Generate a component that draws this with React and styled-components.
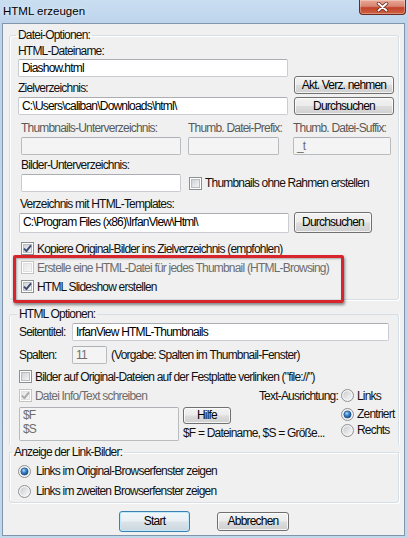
import React, { useId } from 'react';
import styled, { createGlobalStyle, css } from 'styled-components';

const UI_FONT = '"Liberation Sans", Arial, sans-serif';

const GlobalStyle = createGlobalStyle`
  html, body { margin: 0; padding: 0; }
  body {
    background: #c2d7ec;
    font-family: ${UI_FONT};
    font-size: 12px;
    letter-spacing: -0.8px;
    color: #111;
  }
  * { box-sizing: border-box; }
`;

const Window = styled.div`
  width: 408px;
  height: 538px;
  display: flex;
  flex-direction: column;
  background: linear-gradient(180deg, #cadef1 0%, #bdd4eb 23px, #c1d7ec 100%);
  overflow: hidden;
`;

const TitleBar = styled.div`
  flex: none;
  height: 23px;
  display: flex;
  align-items: flex-start;
  padding-left: 3px;
`;

const Title = styled.div`
  font-size: 11.5px;
  letter-spacing: 0;
  line-height: 14px;
  padding-top: 4px;
  color: #000;
  text-shadow: 0 0 5px rgba(255, 255, 255, 0.9);
`;

const CloseButton = styled.div`
  margin-left: auto;
  margin-right: 2px;
  width: 47px;
  height: 15px;
  border: 1px solid #6a2a20;
  border-top: none;
  border-radius: 0 0 4px 4px;
  background: linear-gradient(180deg, #e9a796 0%, #d98571 45%, #c2442c 55%, #d0603f 100%);
  box-shadow: inset 0 0 0 1px rgba(255, 255, 255, 0.3);
  display: flex;
  align-items: center;
  justify-content: center;
`;

const Client = styled.div`
  flex: 1;
  margin: 0 3px 2px 2px;
  background: #f0f0f0;
  border: 1px solid #8296ab;
  padding: 0 5px 0 6px;
  display: flex;
  flex-direction: column;
`;

const Group = styled.fieldset`
  margin: ${(p) => p.$mt || 0}px 0 0;
  padding: ${(p) => p.$pad};
  min-width: 0;
  border: 1px solid #d5dfe5;
  border-radius: 3px;
  box-shadow: inset 1px 1px 0 #fff, 1px 1px 0 #fff;
  ${(p) =>
    p.$openBottom &&
    css`
      border-bottom: none;
      border-radius: 3px 3px 0 0;
      box-shadow: inset 1px 0 0 #fff, 1px 0 0 #fff;
    `}
  ${(p) =>
    p.$joined &&
    css`
      border-radius: 0 0 3px 3px;
    `}
`;

const Legend = styled.legend`
  padding: 0 2px;
  margin-left: ${(p) => (p.$ml !== undefined ? p.$ml : -2)}px;
  line-height: 14px;
  color: #111;
`;

const Label = styled.div`
  line-height: 15px;
  white-space: nowrap;
  margin-top: ${(p) => p.$mt || 0}px;
  margin-bottom: ${(p) => p.$mb || 0}px;
  margin-left: ${(p) => p.$ml || 0}px;
  color: ${(p) => (p.$disabled ? '#5a5a5a' : '#111')};
`;

const TextBox = styled.div`
  flex: none;
  width: ${(p) => p.$w}px;
  height: ${(p) => p.$h || 18}px;
  margin-left: ${(p) => p.$ml || 0}px;
  padding: 0 3px;
  display: flex;
  align-items: center;
  border: 1px solid ${(p) => (p.$disabled ? '#b9bcbf' : '#c9ccd1')};
  border-top-color: ${(p) => (p.$disabled ? '#adb1b5' : '#abadb3')};
  border-radius: 2px;
  background: ${(p) => (p.$disabled ? '#f4f4f4' : '#fff')};
  color: ${(p) => (p.$disabled ? '#6d6d6d' : '#000')};
  line-height: 15px;
  white-space: nowrap;
  overflow: hidden;
`;

const TextArea = styled.div`
  width: 160px;
  height: 34px;
  margin-top: 2px;
  padding: 0 3px;
  border: 1px solid #b9bcbf;
  border-top-color: #adb1b5;
  border-radius: 2px;
  background: #f4f4f4;
  color: #6d6d6d;
  line-height: 14px;
`;

const Button = styled.button`
  flex: none;
  width: ${(p) => p.$w}px;
  height: ${(p) => p.$h || 18}px;
  margin-left: ${(p) => (p.$push ? 'auto' : '0')};
  margin-right: ${(p) => p.$mr || 0}px;
  padding: 0;
  font-family: ${UI_FONT};
  font-size: 12px;
  letter-spacing: -0.8px;
  line-height: 15px;
  white-space: nowrap;
  color: #000;
  border: 1px solid #707070;
  border-radius: 3px;
  background: linear-gradient(180deg, #f3f3f3 0%, #ebebeb 48%, #dddddd 52%, #cfcfcf 100%);
  box-shadow: inset 0 0 0 1px rgba(255, 255, 255, 0.75);
  ${(p) =>
    p.$default &&
    css`
      border-color: #3c7fb1;
      box-shadow: inset 0 0 0 1px #bfe8f8;
      background: linear-gradient(180deg, #f0f6f9 0%, #e9eff3 48%, #dae3e9 52%, #cbd6de 100%);
    `}
`;

const TopRows = styled.div`
  display: flex;
`;

const FieldColumn = styled.div`
  display: flex;
  flex-direction: column;
  width: ${(p) => p.$w}px;
  margin-left: ${(p) => p.$ml || 0}px;
`;

const ButtonColumn = styled.div`
  margin-left: auto;
  display: flex;
  flex-direction: column;
  justify-content: flex-end;
  gap: 3px;
`;

const Row = styled.div`
  display: flex;
  align-items: ${(p) => p.$align || 'center'};
  margin-top: ${(p) => p.$mt || 0}px;
  margin-left: ${(p) => p.$ml || 0}px;
  height: ${(p) => (p.$h ? `${p.$h}px` : 'auto')};
`;

const CheckRow = styled.div`
  display: flex;
  align-items: center;
  gap: ${(p) => (p.$gap !== undefined ? p.$gap : 3)}px;
  height: ${(p) => p.$h || 19}px;
  margin-top: ${(p) => p.$mt || 0}px;
  margin-left: ${(p) => p.$ml || 0}px;
  white-space: nowrap;
  color: ${(p) => (p.$disabled ? '#6d6d6d' : '#111')};
`;

const Highlight = styled.div`
  position: relative;
  &::after {
    content: '';
    position: absolute;
    left: -5px;
    right: 50px;
    top: -3px;
    bottom: -7px;
    border: 3px solid #d8242b;
    border-radius: 2px;
    box-shadow: 1px 2px 3px rgba(0, 0, 0, 0.45), inset 1px 1px 2px rgba(0, 0, 0, 0.3);
    pointer-events: none;
  }
`;

const InlineLabel = styled.span`
  width: ${(p) => p.$w}px;
  flex: none;
  white-space: nowrap;
`;

const Hint = styled.span`
  margin-left: 4px;
  white-space: nowrap;
`;

const InfoGrid = styled.div`
  display: grid;
  grid-template-columns: 160px 1fr 52px;
  column-gap: 4px;
`;

const RightText = styled.div`
  justify-self: end;
  align-self: center;
  white-space: nowrap;
`;

const MiddleCell = styled.div`
  margin-top: 2px;
  display: flex;
  flex-direction: column;
  align-items: flex-start;
`;

const HelpText = styled.div`
  margin-top: 2px;
  line-height: 15px;
  white-space: nowrap;
`;

const RadioStack = styled.div`
  display: flex;
  flex-direction: column;
`;

const BottomBar = styled.div`
  display: flex;
  justify-content: center;
  align-items: center;
  gap: 27px;
  margin-top: 8px;
`;

const CheckBox = ({ checked, disabled }) => {
  const id = useId();
  return (
    <svg width="13" height="13" viewBox="0 0 13 13" style={{ flex: 'none' }}>
      <defs>
        <linearGradient id={id} x1="0" y1="0" x2="1" y2="1">
          <stop offset="0" stopColor={disabled ? '#e6e6e6' : '#cdd1d6'} />
          <stop offset="1" stopColor={disabled ? '#f7f7f7' : '#f6f6f6'} />
        </linearGradient>
      </defs>
      <rect x="0.5" y="0.5" width="12" height="12" fill="#fff" stroke={disabled ? '#c4c4c4' : '#8e8f8f'} />
      <rect x="2.5" y="2.5" width="8" height="8" fill={`url(#${id})`} stroke={disabled ? '#e0e0e0' : '#b9bcc1'} />
      {checked && (
        <path
          d="M3 6.6 L5.4 9.1 L10 3.3"
          fill="none"
          stroke={disabled ? '#a8a8a8' : '#3b4a72'}
          strokeWidth="1.9"
          strokeLinejoin="round"
        />
      )}
    </svg>
  );
};

const Radio = ({ checked }) => {
  const id = useId();
  return (
    <svg width="13" height="13" viewBox="0 0 13 13" style={{ flex: 'none' }}>
      <defs>
        <linearGradient id={`${id}a`} x1="0" y1="0" x2="1" y2="1">
          <stop offset="0" stopColor="#c9ccd0" />
          <stop offset="1" stopColor="#f8f8f8" />
        </linearGradient>
        <radialGradient id={`${id}b`} cx="0.4" cy="0.35" r="0.7">
          <stop offset="0" stopColor="#a9dcff" />
          <stop offset="0.45" stopColor="#3c86c8" />
          <stop offset="1" stopColor="#123f78" />
        </radialGradient>
      </defs>
      <circle cx="6.5" cy="6.5" r="6" fill="#f4f4f4" stroke="#8e8f8f" />
      <circle cx="6.5" cy="6.5" r="4.3" fill={`url(#${id}a)`} />
      {checked && <circle cx="6.5" cy="6.5" r="3.6" fill={`url(#${id}b)`} stroke="#1b4d86" strokeWidth="0.6" />}
    </svg>
  );
};

const App = () => (
  <Window>
    <GlobalStyle />
    <TitleBar>
      <Title>HTML erzeugen</Title>
      <CloseButton>
        <svg width="13" height="10" viewBox="0 0 13 10">
          <path d="M2.5 1.5 L10.5 8.5 M10.5 1.5 L2.5 8.5" stroke="#5a1b12" strokeWidth="3.4" strokeLinecap="round" />
          <path d="M2.5 1.5 L10.5 8.5 M10.5 1.5 L2.5 8.5" stroke="#fff" strokeWidth="2" strokeLinecap="round" />
        </svg>
      </CloseButton>
    </TitleBar>

    <Client>
      <Group $mt={4} $pad="2px 4px 3px 8px">
        <Legend>Datei-Optionen:</Legend>
        <TopRows>
          <FieldColumn $w={270}>
            <Label>HTML-Dateiname:</Label>
            <TextBox $w={270}>Diashow.html</TextBox>
            <Label $mt={4} $mb={1}>Zielverzeichnis:</Label>
            <TextBox $w={270}>C:\Users\caliban\Downloads\html\</TextBox>
          </FieldColumn>
          <ButtonColumn>
            <Button $w={100}>Akt. Verz. nehmen</Button>
            <Button $w={100}>Durchsuchen</Button>
          </ButtonColumn>
        </TopRows>

        <Row $mt={6} $align="flex-start">
          <FieldColumn $w={160} $ml={3}>
            <Label $disabled $mb={1}>Thumbnails-Unterverzeichnis:</Label>
            <TextBox $w={160} $disabled />
          </FieldColumn>
          <FieldColumn $w={91} $ml={7}>
            <Label $disabled $mb={1}>Thumb. Datei-Prefix:</Label>
            <TextBox $w={91} $disabled />
          </FieldColumn>
          <FieldColumn $w={98} $ml={14}>
            <Label $disabled $mb={1}>Thumb. Datei-Suffix:</Label>
            <TextBox $w={98} $disabled>_t</TextBox>
          </FieldColumn>
        </Row>

        <Row $mt={3} $align="flex-end">
          <FieldColumn $w={160} $ml={3}>
            <Label $mb={1}>Bilder-Unterverzeichnis:</Label>
            <TextBox $w={160} />
          </FieldColumn>
          <CheckRow $h={18} $ml={8}>
            <CheckBox />
            Thumbnails ohne Rahmen erstellen
          </CheckRow>
        </Row>

        <Label $mt={5} $ml={2}>Verzeichnis mit HTML-Templates:</Label>
        <Row>
          <TextBox $w={270} $h={20} $ml={1}>C:\Program Files (x86)\IrfanView\Html\</TextBox>
          <Button $w={78} $h={21} $push $mr={22}>Durchsuchen</Button>
        </Row>

        <CheckRow $mt={6} $ml={3}>
          <CheckBox checked />
          Kopiere Original-Bilder ins Zielverzeichnis (empfohlen)
        </CheckRow>
        <Highlight>
          <CheckRow $ml={3} $disabled>
            <CheckBox disabled />
            Erstelle eine HTML-Datei für jedes Thumbnail (HTML-Browsing)
          </CheckRow>
          <CheckRow $ml={3}>
            <CheckBox checked />
            HTML Slideshow erstellen
          </CheckRow>
        </Highlight>
      </Group>

      <Group $mt={7} $pad="2px 4px 4px 9px" $openBottom>
        <Legend>HTML Optionen:</Legend>
        <Row $h={18}>
          <InlineLabel $w={53}>Seitentitel:</InlineLabel>
          <TextBox $w={317}>IrfanView HTML-Thumbnails</TextBox>
        </Row>
        <Row $h={18} $mt={5}>
          <InlineLabel $w={53}>Spalten:</InlineLabel>
          <TextBox $w={35} $disabled>11</TextBox>
          <Hint>(Vorgabe: Spalten im Thumbnail-Fenster)</Hint>
        </Row>
        <CheckRow $mt={3}>
          <CheckBox />
          Bilder auf Original-Dateien auf der Festplatte verlinken (&quot;file://&quot;)
        </CheckRow>
        <InfoGrid>
          <CheckRow $disabled>
            <CheckBox checked disabled />
            Datei Info/Text schreiben
          </CheckRow>
          <RightText>Text-Ausrichtung:</RightText>
          <CheckRow $ml={-1}>
            <Radio />
            Links
          </CheckRow>

          <TextArea>
            $F
            <br />
            $S
          </TextArea>
          <MiddleCell>
            <Button $w={48} $h={17}>Hilfe</Button>
            <HelpText>$F = Dateiname, $S = Größe...</HelpText>
          </MiddleCell>
          <RadioStack>
            <CheckRow $h={16} $ml={-1} $mt={1}>
              <Radio checked />
              Zentriert
            </CheckRow>
            <CheckRow $h={16} $ml={-1}>
              <Radio />
              Rechts
            </CheckRow>
          </RadioStack>
        </InfoGrid>
      </Group>

      <Group $pad="2px 4px 1px 8px" $joined>
        <Legend $ml={-6}>Anzeige der Link-Bilder:</Legend>
        <CheckRow $h={20} $gap={5}>
          <Radio checked />
          Links im Original-Browserfenster zeigen
        </CheckRow>
        <CheckRow $h={20} $gap={5}>
          <Radio />
          Links im zweiten Browserfenster zeigen
        </CheckRow>
      </Group>

      <BottomBar>
        <Button $w={71} $h={21} $default>Start</Button>
        <Button $w={72} $h={19}>Abbrechen</Button>
      </BottomBar>
    </Client>
  </Window>
);

export default App;
